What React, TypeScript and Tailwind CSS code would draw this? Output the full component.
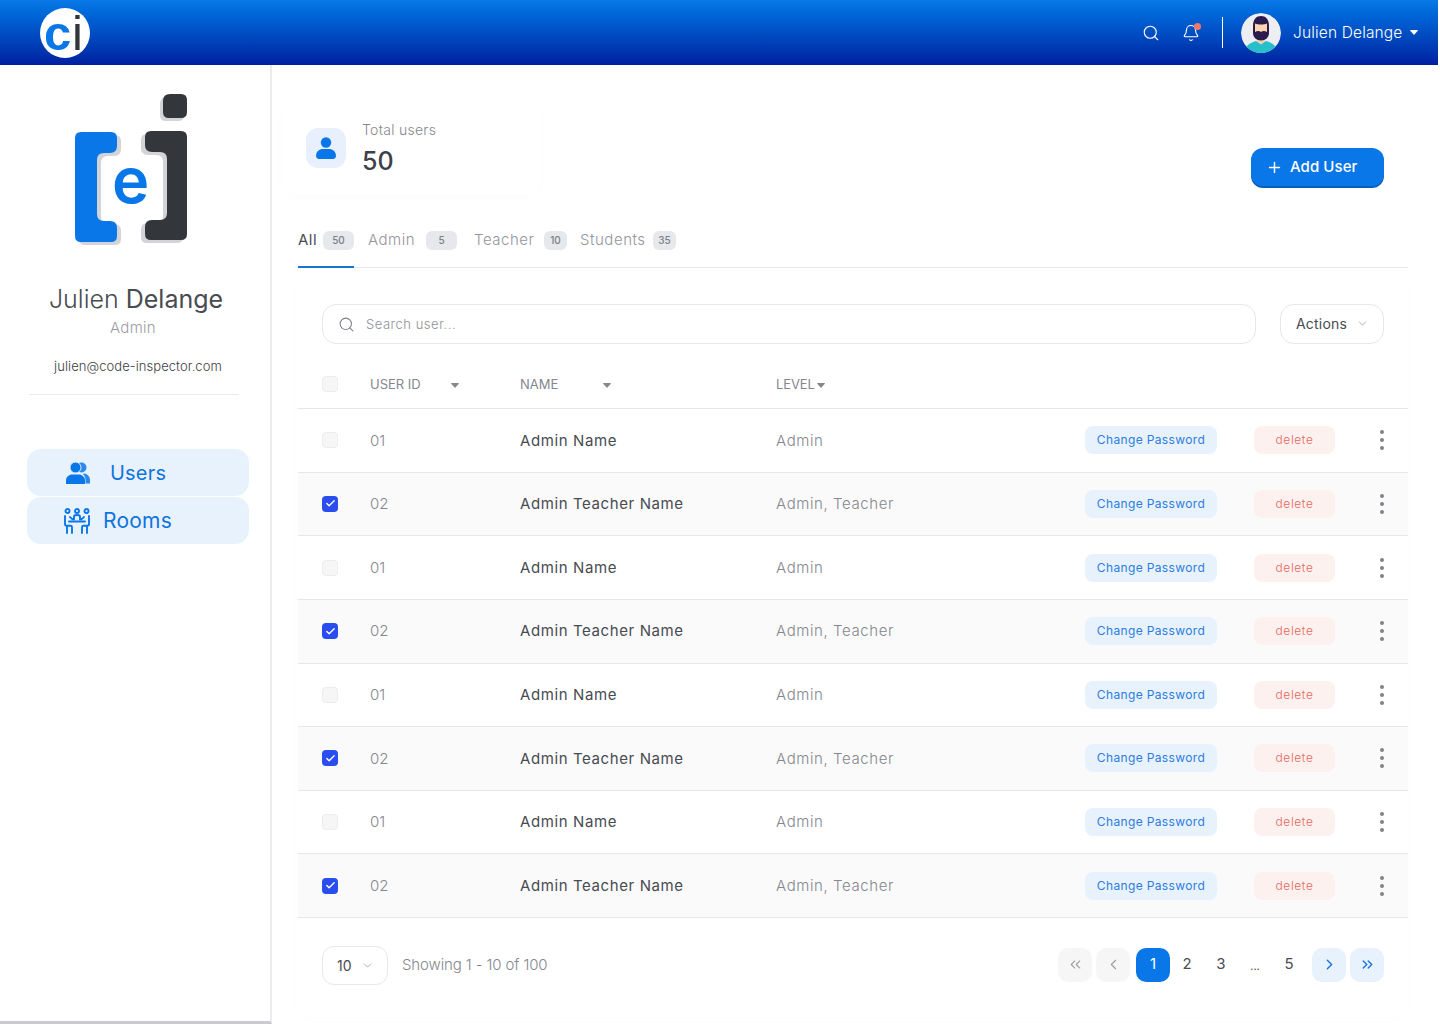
import React from "react";
import { Bell, Check, ChevronDown, ChevronLeft, ChevronRight, ChevronsLeft, ChevronsRight, Plus, Search } from "lucide-react";

const rows = [
  { id: "01", name: "Admin Name", level: "Admin", on: false },
  { id: "02", name: "Admin Teacher Name", level: "Admin, Teacher", on: true },
  { id: "01", name: "Admin Name", level: "Admin", on: false },
  { id: "02", name: "Admin Teacher Name", level: "Admin, Teacher", on: true },
  { id: "01", name: "Admin Name", level: "Admin", on: false },
  { id: "02", name: "Admin Teacher Name", level: "Admin, Teacher", on: true },
  { id: "01", name: "Admin Name", level: "Admin", on: false },
  { id: "02", name: "Admin Teacher Name", level: "Admin, Teacher", on: true },
];

function Caret({ className }: { className: string }) {
  return (
    <svg viewBox="0 0 8 5" className={className} fill="currentColor">
      <path d="M.6 0h6.8c.4 0 .7.5.4.8L4.4 4.6a.5.5 0 0 1-.8 0L.2.8C-.1.5.2 0 .6 0z" />
    </svg>
  );
}

function CiLogo() {
  return (
    <div className="w-[50px] h-[50px] rounded-full bg-white">
      <svg viewBox="0 0 50 50" className="w-[50px] h-[50px] overflow-visible">
        <text x="4" y="42" fontSize="49" fontWeight="700" fontFamily="Liberation Sans, Arial, sans-serif" fill="#0a77e8">c</text>
        <text x="32" y="42" fontSize="49" fontWeight="400" fontFamily="Liberation Sans, Arial, sans-serif" fill="#33363b">i</text>
      </svg>
    </div>
  );
}

function Avatar() {
  return (
    <svg viewBox="0 0 40 40" className="w-10 h-10 rounded-full">
      <circle cx="20" cy="20" r="20" fill="#eceef2" />
      <path d="M4 40c-1-6 4-10 11-12l5 3 5-3c7 2 12 6 11 12z" fill="#27bfc9" />
      <path d="M16 25h8v3l-4 3.500-4-3.500z" fill="#f8cfa6" />
      <path d="M12 13c0-7 3.500-10 8-10s8 3 8 10v7c0 4.500-3.500 7.500-8 7.500s-8-3-8-7.500z" fill="#2a1a4d" />
      <path d="M14 10.500c3 1.300 9 1.300 12 0V19c-2-1.300-4.500-1.300-6 0-1.500-1.300-4-1.300-6 0z" fill="#fbd3ad" />
    </svg>
  );
}

function BigLogo() {
  const left = "M81 132H111Q117 132 117 138V146Q117 153 110 153H104Q97 153 97 160V214Q97 221 104 221H110Q117 221 117 228V236Q117 242 111 242H81Q75 242 75 236V138Q75 132 81 132Z";
  const right = "M181 131H151Q145 131 145 137V145Q145 152 152 152H160Q167 152 167 159V213Q167 220 160 220H152Q145 220 145 227V234Q145 240 151 240H181Q187 240 187 234V137Q187 131 181 131Z";
  const dot = "M170 94H181Q187 94 187 100V112Q187 118 181 118H169Q163 118 163 112V101Q163 94 170 94Z";
  return (
    <svg viewBox="70 90 125 160" className="w-[125px] h-[160px]">
      <path d={left} fill="#d2d4d7" transform="translate(4 3)" />
      <path d={right} fill="#d2d4d7" transform="translate(-4 3)" />
      <path d={dot} fill="#d2d4d7" transform="translate(-3 3)" />
      <path d={left} fill="#0a77e8" />
      <path d={right} fill="#33363b" />
      <path d={dot} fill="#33363b" />
      <text x="112" y="203" fontSize="63" fontWeight="600" fontFamily="Inter, sans-serif" fill="#0a77e8">e</text>
    </svg>
  );
}

function UsersIcon() {
  return (
    <svg viewBox="0 0 24 22" className="w-6 h-[22px]" fill="#0a77e8">
      <circle cx="15.500" cy="5.500" r="5" fill="#0a77e8" opacity="0.85" />
      <path d="M19 11.500c3 .8 5 3.500 5 6.500v3.500h-4.500V18c0-2.500-1-4.700-2.800-6.200z" opacity="0.85" />
      <circle cx="9.500" cy="5.500" r="5.500" stroke="#e8f2fd" strokeWidth="1" />
      <path d="M0 22v-3.500C0 15 3 12.500 6 12.500h7c3 0 6 2.500 6 6V22z" />
    </svg>
  );
}

function RoomsIcon() {
  return (
    <svg viewBox="0 0 26 26" className="w-[26px] h-[26px]" fill="none" stroke="#0a77e8" strokeWidth="1.900" strokeLinecap="round" strokeLinejoin="round">
      <circle cx="3.500" cy="3" r="2" />
      <circle cx="13" cy="3" r="2" />
      <circle cx="22.500" cy="3" r="2" />
      <path d="M1 8v8c0 1 .8 1.800 1.800 1.800H6.500c1 0 1.500.7 1.500 1.500V25" />
      <path d="M3 18v7" />
      <path d="M25 8v8c0 1-.8 1.800-1.800 1.800h-3.700c-1 0-1.500.7-1.500 1.500V25" />
      <path d="M23 18v7" />
      <path d="M6 9c1.500 2 3 2.500 4 2.500V8.500c0-1 1-1.500 3-1.500s3 .5 3 1.500v3c1 0 2.500-.5 4-2.500" />
      <path d="M5 13.500h16" />
    </svg>
  );
}

function Tab({ label, count, labelW, badgeW, active }: { label: string; count: string; labelW: string; badgeW: string; active?: boolean }) {
  return (
    <div className={`flex items-center h-[48px] pb-[6px] border-b-2 ${active ? "border-[#1a73cf] text-[#4a4d53]" : "border-transparent text-[#93959c]"}`}>
      <span className={`${labelW} text-[15px] tracking-[0.035em] whitespace-nowrap ${active ? "" : "font-light"}`}>{label}</span>
      <span className={`${badgeW} h-[19px] rounded-md bg-[#e6e8eb] text-[#7d8087] text-[10px] font-medium flex items-center justify-center`}>{count}</span>
    </div>
  );
}

function Box({ on }: { on: boolean }) {
  return on ? (
    <span className="w-4 h-4 rounded-[4px] bg-[#2a4df0] flex items-center justify-center">
      <Check size={11} strokeWidth={3} className="text-white" />
    </span>
  ) : (
    <span className="w-4 h-4 rounded-[4px] bg-[#f6f6f7] border border-[#ececee]" />
  );
}

function Page({ children, kind }: { children: React.ReactNode; kind: "off" | "on" | "plain" | "next" }) {
  const styles = {
    off: "bg-[#f6f6f7] text-[#9a9ca3]",
    on: "bg-[#0a77e8] text-white",
    plain: "text-[#4a4d53]",
    next: "bg-[#e8f2fd] text-[#1a73dd]",
  };
  return <div className={`w-[34px] h-[34px] rounded-[10px] flex items-center justify-center text-[15px] ${styles[kind]}`}>{children}</div>;
}

export default function App() {
  return (
    <div className="w-[1438px] h-[1024px] overflow-hidden bg-white font-['Inter',sans-serif] text-[#484b51]">
      <header className="h-[65px] flex items-center bg-gradient-to-b from-[#0a79e8] to-[#001fa0] pl-10 pr-5 text-white">
        <CiLogo />
        <div className="ml-auto flex items-center">
          <Search size={18} strokeWidth={1.500} />
          <div className="relative ml-[22px]">
            <Bell size={18} strokeWidth={1.500} />
            <span className="absolute -top-[1px] right-[-1px] w-[7px] h-[7px] rounded-full bg-[#f4776a]" />
          </div>
          <div className="w-px h-[31px] bg-white ml-[22px]" />
          <div className="ml-[18px]"><Avatar /></div>
          <span className="ml-3 w-[110px] text-[15.5px] font-light tracking-[0.01em] whitespace-nowrap">Julien Delange</span>
          <Caret className="ml-[7px] w-2 h-[5px] text-white" />
        </div>
      </header>

      <div className="flex h-[959px]">
        <aside className="w-[272px] shrink-0 border-r-2 border-[#ececef] border-b-[3px] border-b-[#c9cbcf] flex flex-col items-center">
          <div className="mt-[25px] self-start ml-[70px]"><BigLogo /></div>
          <div className="mt-[33px] ml-[2px] text-[25px] leading-8 whitespace-nowrap"><span className="font-light">Julien</span> Delange</div>
          <div className="mt-[3px] text-[15px] leading-5 text-[#9a9ca3] font-light tracking-[0.02em] -ml-[4px]">Admin</div>
          <div className="mt-[18px] text-[13px] leading-5 font-light tracking-[0.005em] ml-[6px] text-[#3d4046] whitespace-nowrap">julien@code-inspector.com</div>
          <div className="mt-[18px] w-[210px] h-px bg-[#e9e9ec] -ml-[2px]" />
          <nav className="mt-[54px] w-[222px] self-start ml-[27px] flex flex-col gap-px">
            <div className="h-[47px] rounded-[14px] bg-[#e8f2fd] flex items-center pl-[39px] text-[#0f74de]">
              <UsersIcon />
              <span className="ml-5 text-[20px] tracking-[0.01em]">Users</span>
            </div>
            <div className="h-[47px] rounded-[14px] bg-[#e8f2fd] flex items-center pl-[37px] text-[#0f74de]">
              <RoomsIcon />
              <span className="ml-[13px] text-[21px] tracking-[0.01em]">Rooms</span>
            </div>
          </nav>
        </aside>

        <main className="flex-1 pl-[26px] pr-[30px] flex flex-col">
          <div className="pt-[35px] flex items-start justify-between">
            <div className="-ml-4 w-[258px] h-[95px] rounded-2xl shadow-[0_2px_12px_rgba(0,0,0,0.015)] flex items-center pl-6">
              <div className="w-10 h-10 rounded-xl bg-[#e8effd] flex items-center justify-center">
                <svg viewBox="0 0 20 22" className="w-5 h-[22px]" fill="#0a77e8">
                  <circle cx="10" cy="5.500" r="5.200" />
                  <path d="M0 19c0-4.500 3.500-7 7-7h6c3.500 0 7 2.500 7 7 0 1.500-1.200 3-3 3H3c-1.800 0-3-1.500-3-3z" />
                </svg>
              </div>
              <div className="ml-4">
                <div className="pt-px text-[14px] leading-5 font-light text-[#85878e] tracking-[0.02em]">Total users</div>
                <div className="mt-[5px] text-[25px] leading-8 font-medium text-[#3d4046]">50</div>
              </div>
            </div>
            <button className="mt-[48px] mr-6 w-[133px] h-[38px] rounded-xl bg-[#0a77e8] shadow-[0_2px_0_#0862bd] text-white flex items-center justify-start pl-[15px] text-[15px] font-medium">
              <Plus size={17} strokeWidth={2} />
              <span className="ml-[7px] pt-px tracking-[0.005em] whitespace-nowrap">Add User</span>
            </button>
          </div>

          <div className="mt-[25px] h-[48px] flex items-start border-b border-[#e6e7ea]">
            <Tab label="All" count="50" labelW="w-[25px]" badgeW="w-[31px]" active />
            <div className="ml-[14px]"><Tab label="Admin" count="5" labelW="w-[58px]" badgeW="w-[31px]" /></div>
            <div className="ml-[17px]"><Tab label="Teacher" count="10" labelW="w-[70px]" badgeW="w-[23px]" /></div>
            <div className="ml-[13px]"><Tab label="Students" count="35" labelW="w-[73px]" badgeW="w-[23px]" /></div>
          </div>

          <section className="mt-2 flex-1 -ml-[2px] pl-[2px] rounded-2xl shadow-[0_2px_12px_rgba(0,0,0,0.015)] mb-[7px]">
            <div className="pt-[28px] px-6 flex items-center">
              <div className="flex-1 h-10 rounded-[14px] border border-[#e8e8eb] flex items-center pl-[15px]">
                <Search size={17} strokeWidth={1.500} className="text-[#808289]" />
                <input placeholder="Search user..." className="ml-[11px] flex-1 pt-px outline-none text-[13px] font-light tracking-[0.04em] placeholder:text-[#8f9198]" />
              </div>
              <div className="ml-6 w-[104px] h-10 rounded-[14px] border border-[#e8e8eb] flex items-center pl-[15px] pb-px text-[14px] tracking-[0.015em]">
                Actions
                <ChevronDown size={13} strokeWidth={1.500} className="ml-[9px] text-[#9a9ca3]" />
              </div>
            </div>

            <div className="h-[65px] pt-4 flex items-center border-b border-[#e6e7ea] pl-6 text-[13px] text-[#85878e]">
              <Box on={false} />
              <span className="ml-8 w-[81px] pt-[2px] whitespace-nowrap">USER ID</span>
              <Caret className="mt-[2px] w-2 h-[5px] text-[#85878e]" />
              <span className="ml-[61px] w-[83px] pt-[2px] whitespace-nowrap">NAME</span>
              <Caret className="mt-[2px] w-2 h-[5px] text-[#85878e]" />
              <span className="ml-[165px] w-[37px] pt-[2px] whitespace-nowrap tracking-[-0.01em]">LEVEL</span>
              <Caret className="mt-[2px] ml-1 w-2 h-[5px] text-[#85878e]" />
            </div>

            {rows.map((r, i) => (
              <div key={i} className={`h-[63.625px] flex items-center border-b border-[#e6e7ea] pl-6 pr-6 ${r.on ? "bg-[#fafafa]" : "bg-white"}`}>
                <Box on={r.on} />
                <span className="ml-8 w-[150px] pt-px text-[15px] font-light text-[#85878e]">{r.id}</span>
                <span className="w-[256px] pt-px text-[15px] tracking-[0.04em] text-[#484b51] whitespace-nowrap">{r.name}</span>
                <span className="flex-1 pt-px text-[15px] font-light tracking-[0.04em] text-[#85878e] whitespace-nowrap">{r.level}</span>
                <span className="w-[132px] h-[28px] rounded-lg bg-[#e8f2fd] flex items-center justify-center text-[12px] text-[#2b7de0] tracking-[0.03em] whitespace-nowrap">Change Password</span>
                <span className="ml-[37px] w-[81px] h-[28px] rounded-lg bg-[#fdf1ef] flex items-center justify-center text-[12px] font-light text-[#e8665c] tracking-[0.05em]">delete</span>
                <span className="ml-[45px] w-1 flex flex-col gap-1">
                  <span className="w-1 h-1 rounded-full bg-[#808289]" />
                  <span className="w-1 h-1 rounded-full bg-[#808289]" />
                  <span className="w-1 h-1 rounded-full bg-[#808289]" />
                </span>
              </div>
            ))}

            <div className="pt-7 px-6 flex items-center">
              <div className="w-[66px] h-[39px] rounded-xl border border-[#e8e8eb] flex items-center pl-[14px] text-[14px]">
                10
                <ChevronDown size={13} strokeWidth={1.500} className="ml-[9px] text-[#9a9ca3]" />
              </div>
              <span className="ml-[14px] text-[15px] font-light text-[#85878e] tracking-[-0.008em] whitespace-nowrap">Showing 1 - 10 of 100</span>
              <div className="ml-auto -mt-[2px] flex items-center">
                <Page kind="off"><ChevronsLeft size={17} strokeWidth={1.500} /></Page>
                <div className="ml-1"><Page kind="off"><ChevronLeft size={17} strokeWidth={1.500} /></Page></div>
                <div className="ml-[6px]"><Page kind="on">1</Page></div>
                <Page kind="plain">2</Page>
                <Page kind="plain">3</Page>
                <Page kind="plain"><span className="text-[11px] pt-1">...</span></Page>
                <Page kind="plain">5</Page>
                <div className="ml-[6px]"><Page kind="next"><ChevronRight size={17} strokeWidth={2} /></Page></div>
                <div className="ml-1"><Page kind="next"><ChevronsRight size={17} strokeWidth={2} /></Page></div>
              </div>
            </div>
          </section>
        </main>
      </div>
    </div>
  );
}
